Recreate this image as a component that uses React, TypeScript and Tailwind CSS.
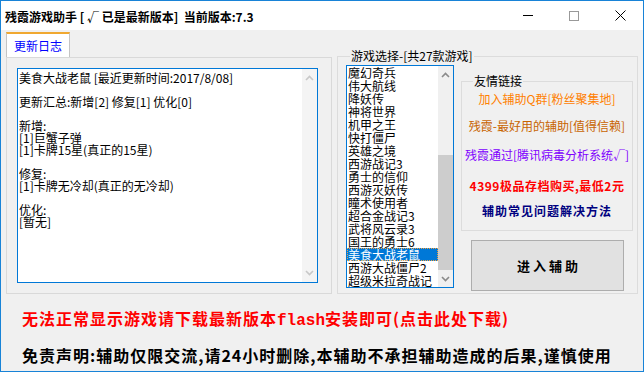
import React from 'react';

const logLines = [
  '美食大战老鼠 [最近更新时间:2017/8/08]',
  '',
  '更新汇总:新增[2] 修复[1] 优化[0]',
  '',
  '新增:',
  '[1]巨蟹子弹',
  '[1]卡牌15星(真正的15星)',
  '',
  '修复:',
  '[1]卡牌无冷却(真正的无冷却)',
  '',
  '优化:',
  '[暂无]',
];

const games = [
  '魔幻奇兵',
  '伟大航线',
  '降妖传',
  '神将世界',
  '机甲之王',
  '快打僵尸',
  '英雄之境',
  '西游战记3',
  '勇士的信仰',
  '西游灭妖传',
  '瞳术使用者',
  '超合金战记3',
  '武将风云录3',
  '国王的勇士6',
  '美食大战老鼠',
  '西游大战僵尸2',
  '超级米拉奇战记',
];

function Chevron({ up, color }: { up?: boolean; color: string }) {
  return (
    <svg width="9" height="6" viewBox="0 0 9 6">
      <polyline
        points={up ? '1,5 4.5,1.5 8,5' : '1,1 4.5,4.5 8,1'}
        fill="none"
        stroke={color}
        strokeWidth="1.6"
      />
    </svg>
  );
}

export default function App() {
  return (
    <div className="w-[644px] h-[372px] flex flex-col border border-[#1883d7] bg-[#f0f0f0] overflow-hidden font-['Noto_Sans_CJK_SC',sans-serif] text-black">
      {/* title bar */}
      <div className="h-[29px] bg-white flex items-center shrink-0">
        <div className="flex-1 pl-[4px] pt-[3px] text-[12px] font-bold whitespace-pre">
          残霞游戏助手 [ √ 已是最新版本]  当前版本:7.3
        </div>
        <div className="w-[46px] h-full flex items-center justify-center">
          <div className="w-[10px] h-px bg-black" />
        </div>
        <div className="w-[46px] h-full flex items-center justify-center">
          <div className="w-[10px] h-[10px] border border-[#999999]" />
        </div>
        <div className="w-[46px] h-full flex items-center justify-center">
          <svg width="11" height="11" viewBox="0 0 11 11">
            <path d="M0.5 0.5 L10.5 10.5 M10.5 0.5 L0.5 10.5" stroke="#000" strokeWidth="1" />
          </svg>
        </div>
      </div>

      <div className="flex-1 px-[5px]">
        <div className="flex items-start mt-[2px]">
          {/* tab control */}
          <div className="w-[326px]">
            <div className="h-[25px] flex">
              <div className="w-[64px] h-full bg-white border-x border-[#c4c4c4] border-t-2 border-t-[#f0a830] flex items-center justify-center text-[12px] text-[#0000ff]">
                更新日志
              </div>
            </div>
            <div className="h-[237px] border border-[#d9d9d9] pl-[10px] pt-[10px] pr-[13px] pb-[10px] flex">
              <div className="flex-1 border border-[#0078d7] bg-white flex">
                <div className="flex-1 pl-[1px] pt-[3px] text-[12px] leading-[12px] whitespace-pre">
                  {logLines.map((l, i) => (
                    <div key={i} className="h-[12px]">{l}</div>
                  ))}
                </div>
                <div className="w-[15px] bg-[#f4f4f4] flex flex-col justify-between items-center py-[6px]">
                  <Chevron up color="#c8c8c8" />
                  <Chevron color="#c8c8c8" />
                </div>
              </div>
            </div>
          </div>

          {/* game select group */}
          <div className="ml-[5px] mt-[24px] w-[301px] h-[238px] border border-[#dcdcdc] relative">
            <div className="absolute top-[-8px] left-[12px] px-[1px] bg-[#f0f0f0] text-[12px] leading-[14px]">
              游戏选择-[共27款游戏]
            </div>
            <div className="flex pl-[8px] pt-[8px]">
              <div className="w-[108px] h-[223px] border border-[#0078d7] bg-white flex">
                <div className="flex-1 text-[12px] leading-[13px]">
                  {games.map((g) =>
                    g === '美食大战老鼠' ? (
                      <div key={g} className="h-[13px] bg-[#0078d7] text-white pl-[1px] outline outline-1 outline-dotted outline-[#f0a040] -outline-offset-1">
                        {g}
                      </div>
                    ) : (
                      <div key={g} className="h-[13px] pl-[1px]">{g}</div>
                    )
                  )}
                </div>
                <div className="w-[15px] bg-[#f0f0f0] flex flex-col">
                  <div className="h-[17px] flex items-center justify-center">
                    <Chevron up color="#8a8a8a" />
                  </div>
                  <div className="flex-1 flex flex-col justify-end">
                    <div className="h-[115px] bg-[#cdcdcd]" />
                  </div>
                  <div className="h-[17px] flex items-center justify-center">
                    <Chevron color="#8a8a8a" />
                  </div>
                </div>
              </div>

              <div className="ml-[7px] pt-[16px] w-[172px]">
                <div className="h-[150px] border border-[#dcdcdc] relative flex flex-col items-center pt-[10px] text-[12px] leading-[14px]">
                  <div className="absolute top-[-8px] left-[11px] px-[1px] bg-[#f0f0f0]">友情链接</div>
                  <div className="text-[#ff8000]">加入辅助Q群[粉丝聚集地]</div>
                  <div className="mt-[13px] text-[#c86400]">残霞-最好用的辅助[值得信赖]</div>
                  <div className="mt-[15px] text-[#8000ff]">残霞通过[腾讯病毒分析系统√]</div>
                  <div className="mt-[17px] text-[#ff0000] font-bold tracking-[0.5px]">4399极品存档购买,最低2元</div>
                  <div className="mt-[11px] text-[#000080] font-bold tracking-[1px]">辅助常见问题解决方法</div>
                </div>
                <button className="mt-[9px] ml-[10px] w-[153px] h-[51px] bg-[#e1e1e1] border border-[#adadad] text-[13px] font-bold whitespace-pre flex items-center justify-center">
                  进 入 辅 助
                </button>
              </div>
            </div>
          </div>
        </div>

        <div className="mt-[14px] pl-[16px] text-[16px] leading-[20px] font-bold tracking-[1px] text-[#ff0000]">
          无法正常显示游戏请下载最新版本<span className="font-['Liberation_Mono',monospace] tracking-normal">flash</span>安装即可(点击此处下载)
        </div>
        <div className="mt-[14px] pl-[16px] text-[16px] leading-[20px] font-bold tracking-[1px]">
          免责声明:辅助仅限交流,请24小时删除,本辅助不承担辅助造成的后果,谨慎使用
        </div>
      </div>
    </div>
  );
}
